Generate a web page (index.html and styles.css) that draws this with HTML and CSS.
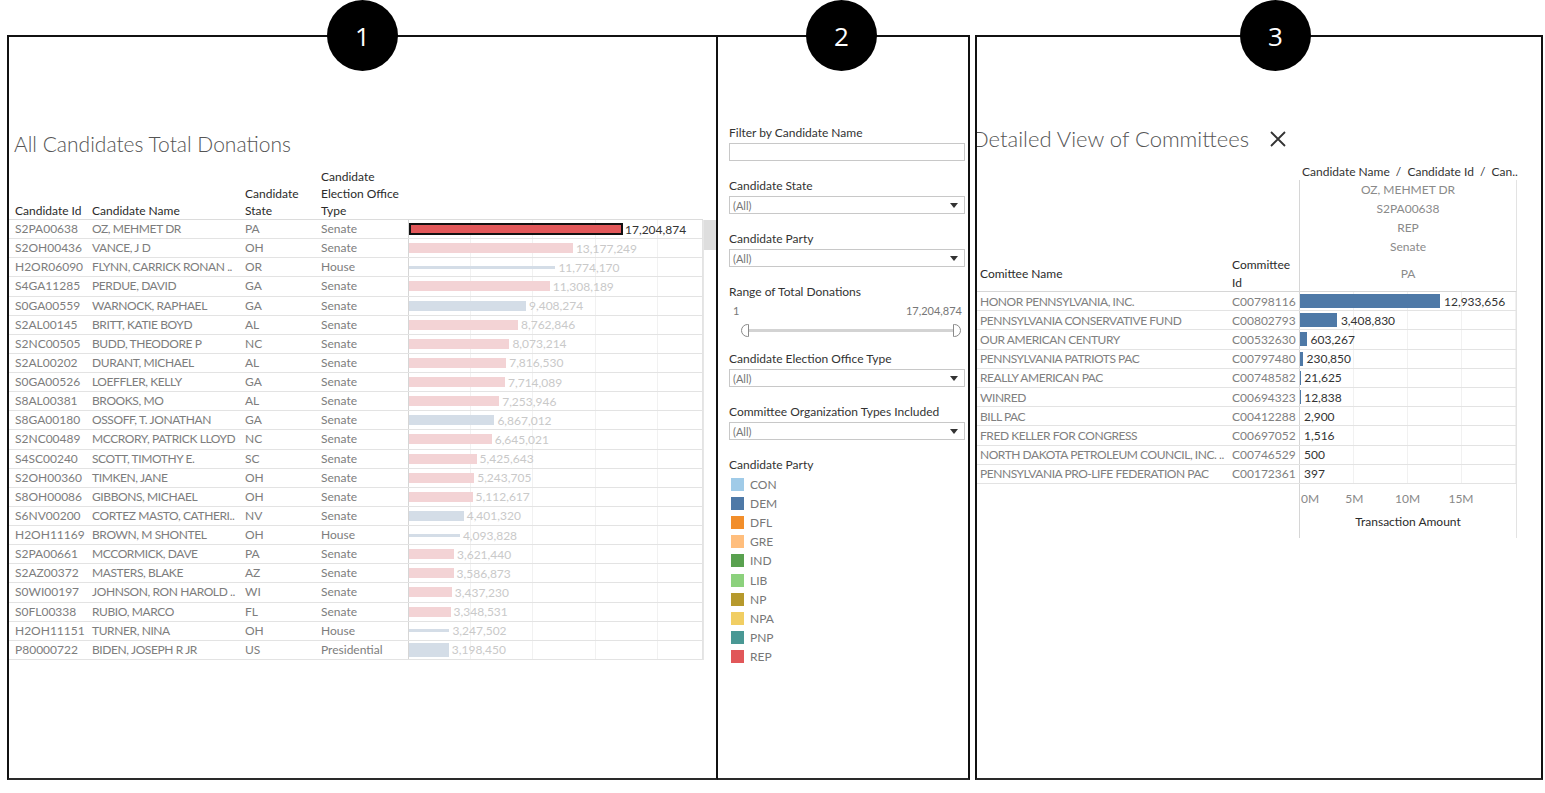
FILE: index.html
```html
<!DOCTYPE html>
<html lang="en">
<head>
<meta charset="utf-8">
<title>Candidate Donations Dashboard</title>
<link rel="stylesheet" href="styles.css">
</head>
<body>
<div class="board">

  <section class="panel panel-cand">
    <h1 class="ptitle">All Candidates Total Donations</h1>
    <div class="chead">
      <div class="hc">Candidate Id</div>
      <div class="hc">Candidate Name</div>
      <div class="hc">Candidate<br>State</div>
      <div class="hc">Candidate<br>Election Office<br>Type</div>
      <div class="hc"></div>
    </div>
    <div class="cbody">
      <div class="crows">
        <div class="crow"><span>S2PA00638</span><span>OZ, MEHMET DR</span><span>PA</span><span>Senate</span><div class="bcell"><i class="bar sel" style="width:214px"></i><em class="val on">17,204,874</em></div></div>
        <div class="crow"><span>S2OH00436</span><span>VANCE, J D</span><span>OH</span><span>Senate</span><div class="bcell"><i class="bar rep senate" style="width:163.9px"></i><em class="val">13,177,249</em></div></div>
        <div class="crow"><span>H2OR06090</span><span>FLYNN, CARRICK RONAN ..</span><span>OR</span><span>House</span><div class="bcell"><i class="bar dem house" style="width:146.4px"></i><em class="val">11,774,170</em></div></div>
        <div class="crow"><span>S4GA11285</span><span>PERDUE, DAVID</span><span>GA</span><span>Senate</span><div class="bcell"><i class="bar rep senate" style="width:140.7px"></i><em class="val">11,308,189</em></div></div>
        <div class="crow"><span>S0GA00559</span><span>WARNOCK, RAPHAEL</span><span>GA</span><span>Senate</span><div class="bcell"><i class="bar dem senate" style="width:117px"></i><em class="val">9,408,274</em></div></div>
        <div class="crow"><span>S2AL00145</span><span>BRITT, KATIE BOYD</span><span>AL</span><span>Senate</span><div class="bcell"><i class="bar rep senate" style="width:109px"></i><em class="val">8,762,846</em></div></div>
        <div class="crow"><span>S2NC00505</span><span>BUDD, THEODORE P</span><span>NC</span><span>Senate</span><div class="bcell"><i class="bar rep senate" style="width:100.4px"></i><em class="val">8,073,214</em></div></div>
        <div class="crow"><span>S2AL00202</span><span>DURANT, MICHAEL</span><span>AL</span><span>Senate</span><div class="bcell"><i class="bar rep senate" style="width:97.2px"></i><em class="val">7,816,530</em></div></div>
        <div class="crow"><span>S0GA00526</span><span>LOEFFLER, KELLY</span><span>GA</span><span>Senate</span><div class="bcell"><i class="bar rep senate" style="width:96px"></i><em class="val">7,714,089</em></div></div>
        <div class="crow"><span>S8AL00381</span><span>BROOKS, MO</span><span>AL</span><span>Senate</span><div class="bcell"><i class="bar rep senate" style="width:90.2px"></i><em class="val">7,253,946</em></div></div>
        <div class="crow"><span>S8GA00180</span><span>OSSOFF, T. JONATHAN</span><span>GA</span><span>Senate</span><div class="bcell"><i class="bar dem senate" style="width:85.4px"></i><em class="val">6,867,012</em></div></div>
        <div class="crow"><span>S2NC00489</span><span>MCCRORY, PATRICK LLOYD</span><span>NC</span><span>Senate</span><div class="bcell"><i class="bar rep senate" style="width:82.7px"></i><em class="val">6,645,021</em></div></div>
        <div class="crow"><span>S4SC00240</span><span>SCOTT, TIMOTHY E.</span><span>SC</span><span>Senate</span><div class="bcell"><i class="bar rep senate" style="width:67.5px"></i><em class="val">5,425,643</em></div></div>
        <div class="crow"><span>S2OH00360</span><span>TIMKEN, JANE</span><span>OH</span><span>Senate</span><div class="bcell"><i class="bar rep senate" style="width:65.2px"></i><em class="val">5,243,705</em></div></div>
        <div class="crow"><span>S8OH00086</span><span>GIBBONS, MICHAEL</span><span>OH</span><span>Senate</span><div class="bcell"><i class="bar rep senate" style="width:63.6px"></i><em class="val">5,112,617</em></div></div>
        <div class="crow"><span>S6NV00200</span><span>CORTEZ MASTO, CATHERI..</span><span>NV</span><span>Senate</span><div class="bcell"><i class="bar dem senate" style="width:54.7px"></i><em class="val">4,401,320</em></div></div>
        <div class="crow"><span>H2OH11169</span><span>BROWN, M SHONTEL</span><span>OH</span><span>House</span><div class="bcell"><i class="bar dem house" style="width:50.9px"></i><em class="val">4,093,828</em></div></div>
        <div class="crow"><span>S2PA00661</span><span>MCCORMICK, DAVE</span><span>PA</span><span>Senate</span><div class="bcell"><i class="bar rep senate" style="width:45px"></i><em class="val">3,621,440</em></div></div>
        <div class="crow"><span>S2AZ00372</span><span>MASTERS, BLAKE</span><span>AZ</span><span>Senate</span><div class="bcell"><i class="bar rep senate" style="width:44.6px"></i><em class="val">3,586,873</em></div></div>
        <div class="crow"><span>S0WI00197</span><span>JOHNSON, RON HAROLD ..</span><span>WI</span><span>Senate</span><div class="bcell"><i class="bar rep senate" style="width:42.8px"></i><em class="val">3,437,230</em></div></div>
        <div class="crow"><span>S0FL00338</span><span>RUBIO, MARCO</span><span>FL</span><span>Senate</span><div class="bcell"><i class="bar rep senate" style="width:41.6px"></i><em class="val">3,348,531</em></div></div>
        <div class="crow"><span>H2OH11151</span><span>TURNER, NINA</span><span>OH</span><span>House</span><div class="bcell"><i class="bar dem house" style="width:40.4px"></i><em class="val">3,247,502</em></div></div>
        <div class="crow"><span>P80000722</span><span>BIDEN, JOSEPH R JR</span><span>US</span><span>Presidential</span><div class="bcell"><i class="bar dem pres" style="width:39.8px"></i><em class="val">3,198,450</em></div></div>
      </div>
      <div class="scroll"><div class="thumb"></div></div>
    </div>
  </section>

  <section class="panel panel-filters">
    <div class="fgroup">
      <div class="flabel">Filter by Candidate Name</div>
      <div class="finput"></div>
    </div>
    <div class="fgroup">
      <div class="flabel">Candidate State</div>
      <div class="fselect"><span>(All)</span><svg width="8" height="5" viewBox="0 0 8 5"><polygon points="0,0 8,0 4,5" fill="#333"/></svg></div>
    </div>
    <div class="fgroup">
      <div class="flabel">Candidate Party</div>
      <div class="fselect"><span>(All)</span><svg width="8" height="5" viewBox="0 0 8 5"><polygon points="0,0 8,0 4,5" fill="#333"/></svg></div>
    </div>
    <div class="fgroup range">
      <div class="flabel">Range of Total Donations</div>
      <div class="rvals"><span>1</span><span>17,204,874</span></div>
      <div class="slider"><i class="knob left"></i><i class="track"></i><i class="knob right"></i></div>
    </div>
    <div class="fgroup">
      <div class="flabel">Candidate Election Office Type</div>
      <div class="fselect"><span>(All)</span><svg width="8" height="5" viewBox="0 0 8 5"><polygon points="0,0 8,0 4,5" fill="#333"/></svg></div>
    </div>
    <div class="fgroup">
      <div class="flabel">Committee Organization Types Included</div>
      <div class="fselect"><span>(All)</span><svg width="8" height="5" viewBox="0 0 8 5"><polygon points="0,0 8,0 4,5" fill="#333"/></svg></div>
    </div>
    <div class="legend">
      <div class="flabel">Candidate Party</div>
      <ul class="litems">
        <li><i class="sw c-con"></i>CON</li>
        <li><i class="sw c-dem"></i>DEM</li>
        <li><i class="sw c-dfl"></i>DFL</li>
        <li><i class="sw c-gre"></i>GRE</li>
        <li><i class="sw c-ind"></i>IND</li>
        <li><i class="sw c-lib"></i>LIB</li>
        <li><i class="sw c-np"></i>NP</li>
        <li><i class="sw c-npa"></i>NPA</li>
        <li><i class="sw c-pnp"></i>PNP</li>
        <li><i class="sw c-rep"></i>REP</li>
      </ul>
    </div>
  </section>

  <section class="panel panel-comm">
    <div class="dtitle">
      <h2 class="ptitle">Detailed View of Committees</h2>
      <svg class="close" width="16" height="16" viewBox="0 0 16 16"><path d="M1 1 L15 15 M15 1 L1 15" stroke="#333" stroke-width="1.8" fill="none"/></svg>
    </div>
    <div class="dhead">
      <div></div><div></div>
      <div class="dpath">Candidate Name&nbsp; /&nbsp; Candidate Id&nbsp; /&nbsp; Can..</div>
      <div></div><div></div>
      <div class="dstack"><span>OZ, MEHMET DR</span><span>S2PA00638</span><span>REP</span><span>Senate</span></div>
      <div class="dh dh-name">Comittee Name</div>
      <div class="dh dh-id">Committee<br>Id</div>
      <div class="dh dh-state">PA</div>
    </div>
    <div class="drows">
      <div class="drow"><span>HONOR PENNSYLVANIA, INC.</span><span>C00798116</span><div class="dbar"><i style="width:140px"></i><em>12,933,656</em></div></div>
      <div class="drow"><span>PENNSYLVANIA CONSERVATIVE FUND</span><span>C00802793</span><div class="dbar"><i style="width:36.9px"></i><em>3,408,830</em></div></div>
      <div class="drow"><span>OUR AMERICAN CENTURY</span><span>C00532630</span><div class="dbar"><i style="width:6.5px"></i><em>603,267</em></div></div>
      <div class="drow"><span>PENNSYLVANIA PATRIOTS PAC</span><span>C00797480</span><div class="dbar"><i style="width:2.5px"></i><em>230,850</em></div></div>
      <div class="drow"><span>REALLY AMERICAN PAC</span><span>C00748582</span><div class="dbar"><i style="width:0.3px"></i><em>21,625</em></div></div>
      <div class="drow"><span>WINRED</span><span>C00694323</span><div class="dbar"><i style="width:0.2px"></i><em>12,838</em></div></div>
      <div class="drow"><span>BILL PAC</span><span>C00412288</span><div class="dbar"><i style="width:0px"></i><em>2,900</em></div></div>
      <div class="drow"><span>FRED KELLER FOR CONGRESS</span><span>C00697052</span><div class="dbar"><i style="width:0px"></i><em>1,516</em></div></div>
      <div class="drow"><span>NORTH DAKOTA PETROLEUM COUNCIL, INC. ..</span><span>C00746529</span><div class="dbar"><i style="width:0px"></i><em>500</em></div></div>
      <div class="drow"><span>PENNSYLVANIA PRO-LIFE FEDERATION PAC</span><span>C00172361</span><div class="dbar"><i style="width:0px"></i><em>397</em></div></div>
    </div>
    <div class="daxis">
      <div class="ticks">
        <span class="t0" style="left:0%">0M</span>
        <span style="left:24.8%">5M</span>
        <span style="left:49.6%">10M</span>
        <span style="left:74.4%">15M</span>
      </div>
      <div class="atitle">Transaction Amount</div>
    </div>
  </section>

  <span class="badge b1">1</span>
  <span class="badge b2">2</span>
  <span class="badge b3">3</span>
</div>
</body>
</html>
```

FILE: styles.css
```css
* { box-sizing: border-box; }
html, body { margin: 0; padding: 0; }
body {
  width: 1545px;
  height: 793px;
  overflow: hidden;
  background: #fff;
  font-family: Lato, "Noto Sans", sans-serif;
  font-size: 12px;
  color: #333;
}
.board {
  position: relative;
  display: flex;
  align-items: flex-start;
  padding: 35px 0 0 7px;
  height: 793px;
}
.panel {
  height: 745px;
  border: 2px solid #111;
  border-bottom-color: #2a2a2a;
  overflow: hidden;
}
.panel-cand { width: 711px; }
.panel-filters { width: 252px; border-left: none; padding: 88px 3px 0 11px; }
.panel-comm { width: 568px; margin-left: 5px; }

.ptitle {
  margin: 0;
  font-size: 21px;
  line-height: 24px;
  font-weight: 300;
  color: #555;
  white-space: nowrap;
}

/* ---------- panel 1 ---------- */
.panel-cand .ptitle { margin: 95px 0 0 5px; }
.chead {
  display: grid;
  grid-template-columns: 79px 153px 76px 91px 295px;
  width: 694px;
  margin-top: 12px;
  border-bottom: 1px solid #dcdcdc;
}
.hc {
  align-self: end;
  line-height: 17px;
  padding-left: 4px;
  color: #2b2b2b;
  white-space: nowrap;
}
.hc:first-child { padding-left: 6px; }
.cbody { display: flex; }
.crows { width: 694px; }
.crow {
  display: grid;
  grid-template-columns: 79px 153px 76px 91px 295px;
  height: 19.14px;
  border-bottom: 1px solid #e3e3e3;
  align-items: center;
  color: #7d7d7d;
  white-space: nowrap;
}
.crow > span { padding-left: 4px; overflow: hidden; line-height: 18px; }
.crow > span:first-child { padding-left: 6px; }
.crow > span:nth-child(2) { letter-spacing: -0.4px; }
.bcell {
  height: 100%;
  display: flex;
  align-items: center;
  border-left: 1px solid #d6d6d6;
  border-right: 1px solid #e3e3e3;
  background: repeating-linear-gradient(90deg, transparent 0, transparent 61.2px, #f1f1f1 61.2px, #f1f1f1 62.2px);
}
.bar { display: block; flex: none; }
.bar.senate { height: 10px; }
.bar.house { height: 3px; }
.bar.pres { height: 14px; }
.bar.rep { background: #f3d3d5; }
.bar.dem { background: #d4dde7; }
.bar.sel { height: 12px; background: #e15759; border: 2px solid #111; }
.val { font-style: normal; margin-left: 3px; color: #c9c9c9; }
.val.on { color: #333; margin-left: 2px; }
.scroll {
  width: 13px;
  border-left: 1px solid #e6e6e6;
}
.thumb { height: 30px; background: #dedede; }

/* ---------- panel 2 ---------- */
.fgroup { margin-bottom: 17px; }
.flabel { line-height: 16px; color: #333; white-space: nowrap; }
.finput, .fselect {
  margin-top: 2px;
  height: 18px;
  border: 1px solid #c8c8c8;
}
.fselect {
  display: flex;
  align-items: center;
  justify-content: space-between;
  padding: 0 6px 0 3px;
  color: #777;
  font-size: 11px;
}
.range { margin-bottom: 14px; }
.rvals {
  display: flex;
  justify-content: space-between;
  margin-top: 3px;
  padding: 0 3px 0 4px;
  line-height: 16px;
  color: #777;
  font-size: 11px;
}
.slider {
  display: flex;
  align-items: center;
  height: 14px;
  margin: 4px 4px 0 12px;
}
.track { display: block; flex: 1; height: 3px; background: #d3d3d3; }
.knob {
  display: block;
  width: 8px;
  height: 13px;
  border: 1px solid #8a8a8a;
  background: #fff;
}
.knob.left { border-radius: 7px 0 0 7px; }
.knob.right { border-radius: 0 7px 7px 0; }
.legend { margin-top: 1px; }
.legend .flabel { margin-bottom: 2px; }
.litems { list-style: none; margin: 0; padding: 0 0 0 2px; }
.litems li {
  display: flex;
  align-items: center;
  height: 19.1px;
  color: #777;
}
.sw { display: block; width: 13px; height: 13px; margin-right: 6px; }
.c-con { background: #a0cbe8; }
.c-dem { background: #4e79a7; }
.c-dfl { background: #f28e2b; }
.c-gre { background: #ffbe7d; }
.c-ind { background: #59a14f; }
.c-lib { background: #8cd17d; }
.c-np { background: #b6992d; }
.c-npa { background: #f1ce63; }
.c-pnp { background: #499894; }
.c-rep { background: #e15759; }

/* ---------- panel 3 ---------- */
.dtitle {
  display: flex;
  align-items: center;
  gap: 21px;
  margin: 90px 0 0 -5px;
}
.dtitle .ptitle { font-size: 22px; }
.close { flex: none; }
.dhead {
  display: grid;
  grid-template-columns: 251px 71px 218px;
  width: 540px;
  margin-top: 12px;
}
.dpath {
  line-height: 17px;
  padding-left: 3px;
  white-space: nowrap;
  color: #333;
}
.dstack {
  display: flex;
  flex-direction: column;
  align-items: center;
  border-left: 1px solid #d6d6d6;
  border-right: 1px solid #e3e3e3;
  color: #8a8a8a;
}
.dstack span { line-height: 19px; }
.dh {
  height: 36px;
  display: flex;
  align-items: center;
  border-bottom: 1px solid #d6d6d6;
  line-height: 18px;
}
.dh-name { padding-left: 3px; color: #2b2b2b; }
.dh-id { padding-left: 4px; color: #2b2b2b; }
.dh-state {
  justify-content: center;
  color: #8a8a8a;
  border-left: 1px solid #d6d6d6;
  border-right: 1px solid #e3e3e3;
}
.drows { width: 540px; }
.drow {
  display: grid;
  grid-template-columns: 251px 71px 218px;
  height: 19.2px;
  border-bottom: 1px solid #e3e3e3;
  align-items: center;
  color: #808080;
  white-space: nowrap;
}
.drow > span { padding-left: 3px; overflow: hidden; }
.drow > span:first-child { letter-spacing: -0.45px; }
.drow > span:nth-child(2) { padding-left: 4px; }
.dbar {
  height: 100%;
  display: flex;
  align-items: center;
  border-left: 1px solid #d6d6d6;
  border-right: 1px solid #e3e3e3;
  background: repeating-linear-gradient(90deg, transparent 0, transparent 53.1px, #f1f1f1 53.1px, #f1f1f1 54.1px);
}
.dbar i { display: block; height: 14px; background: #4e79a7; flex: none; }
.dbar em { font-style: normal; color: #333; margin-left: 4px; }
.daxis {
  margin-left: 322px;
  width: 218px;
  height: 54px;
  border-left: 1px solid #d6d6d6;
  border-right: 1px solid #e3e3e3;
  padding-top: 7px;
}
.ticks { position: relative; height: 16px; margin-left: 1px; color: #888; }
.ticks span { position: absolute; top: 0; line-height: 16px; transform: translateX(-50%); }
.ticks span.t0 { transform: none; }
.atitle { margin-top: 7px; text-align: center; line-height: 16px; color: #2b2b2b; }

/* ---------- badges ---------- */
.badge {
  position: absolute;
  top: 0;
  width: 71px;
  height: 71px;
  border-radius: 50%;
  background: #000;
  color: #fff;
  display: flex;
  align-items: center;
  justify-content: center;
  font-family: "Open Sans", "Noto Sans", sans-serif;
  font-size: 26px;
}
.b1 { left: 327px; }
.b2 { left: 806px; }
.b3 { left: 1240px; }
```
